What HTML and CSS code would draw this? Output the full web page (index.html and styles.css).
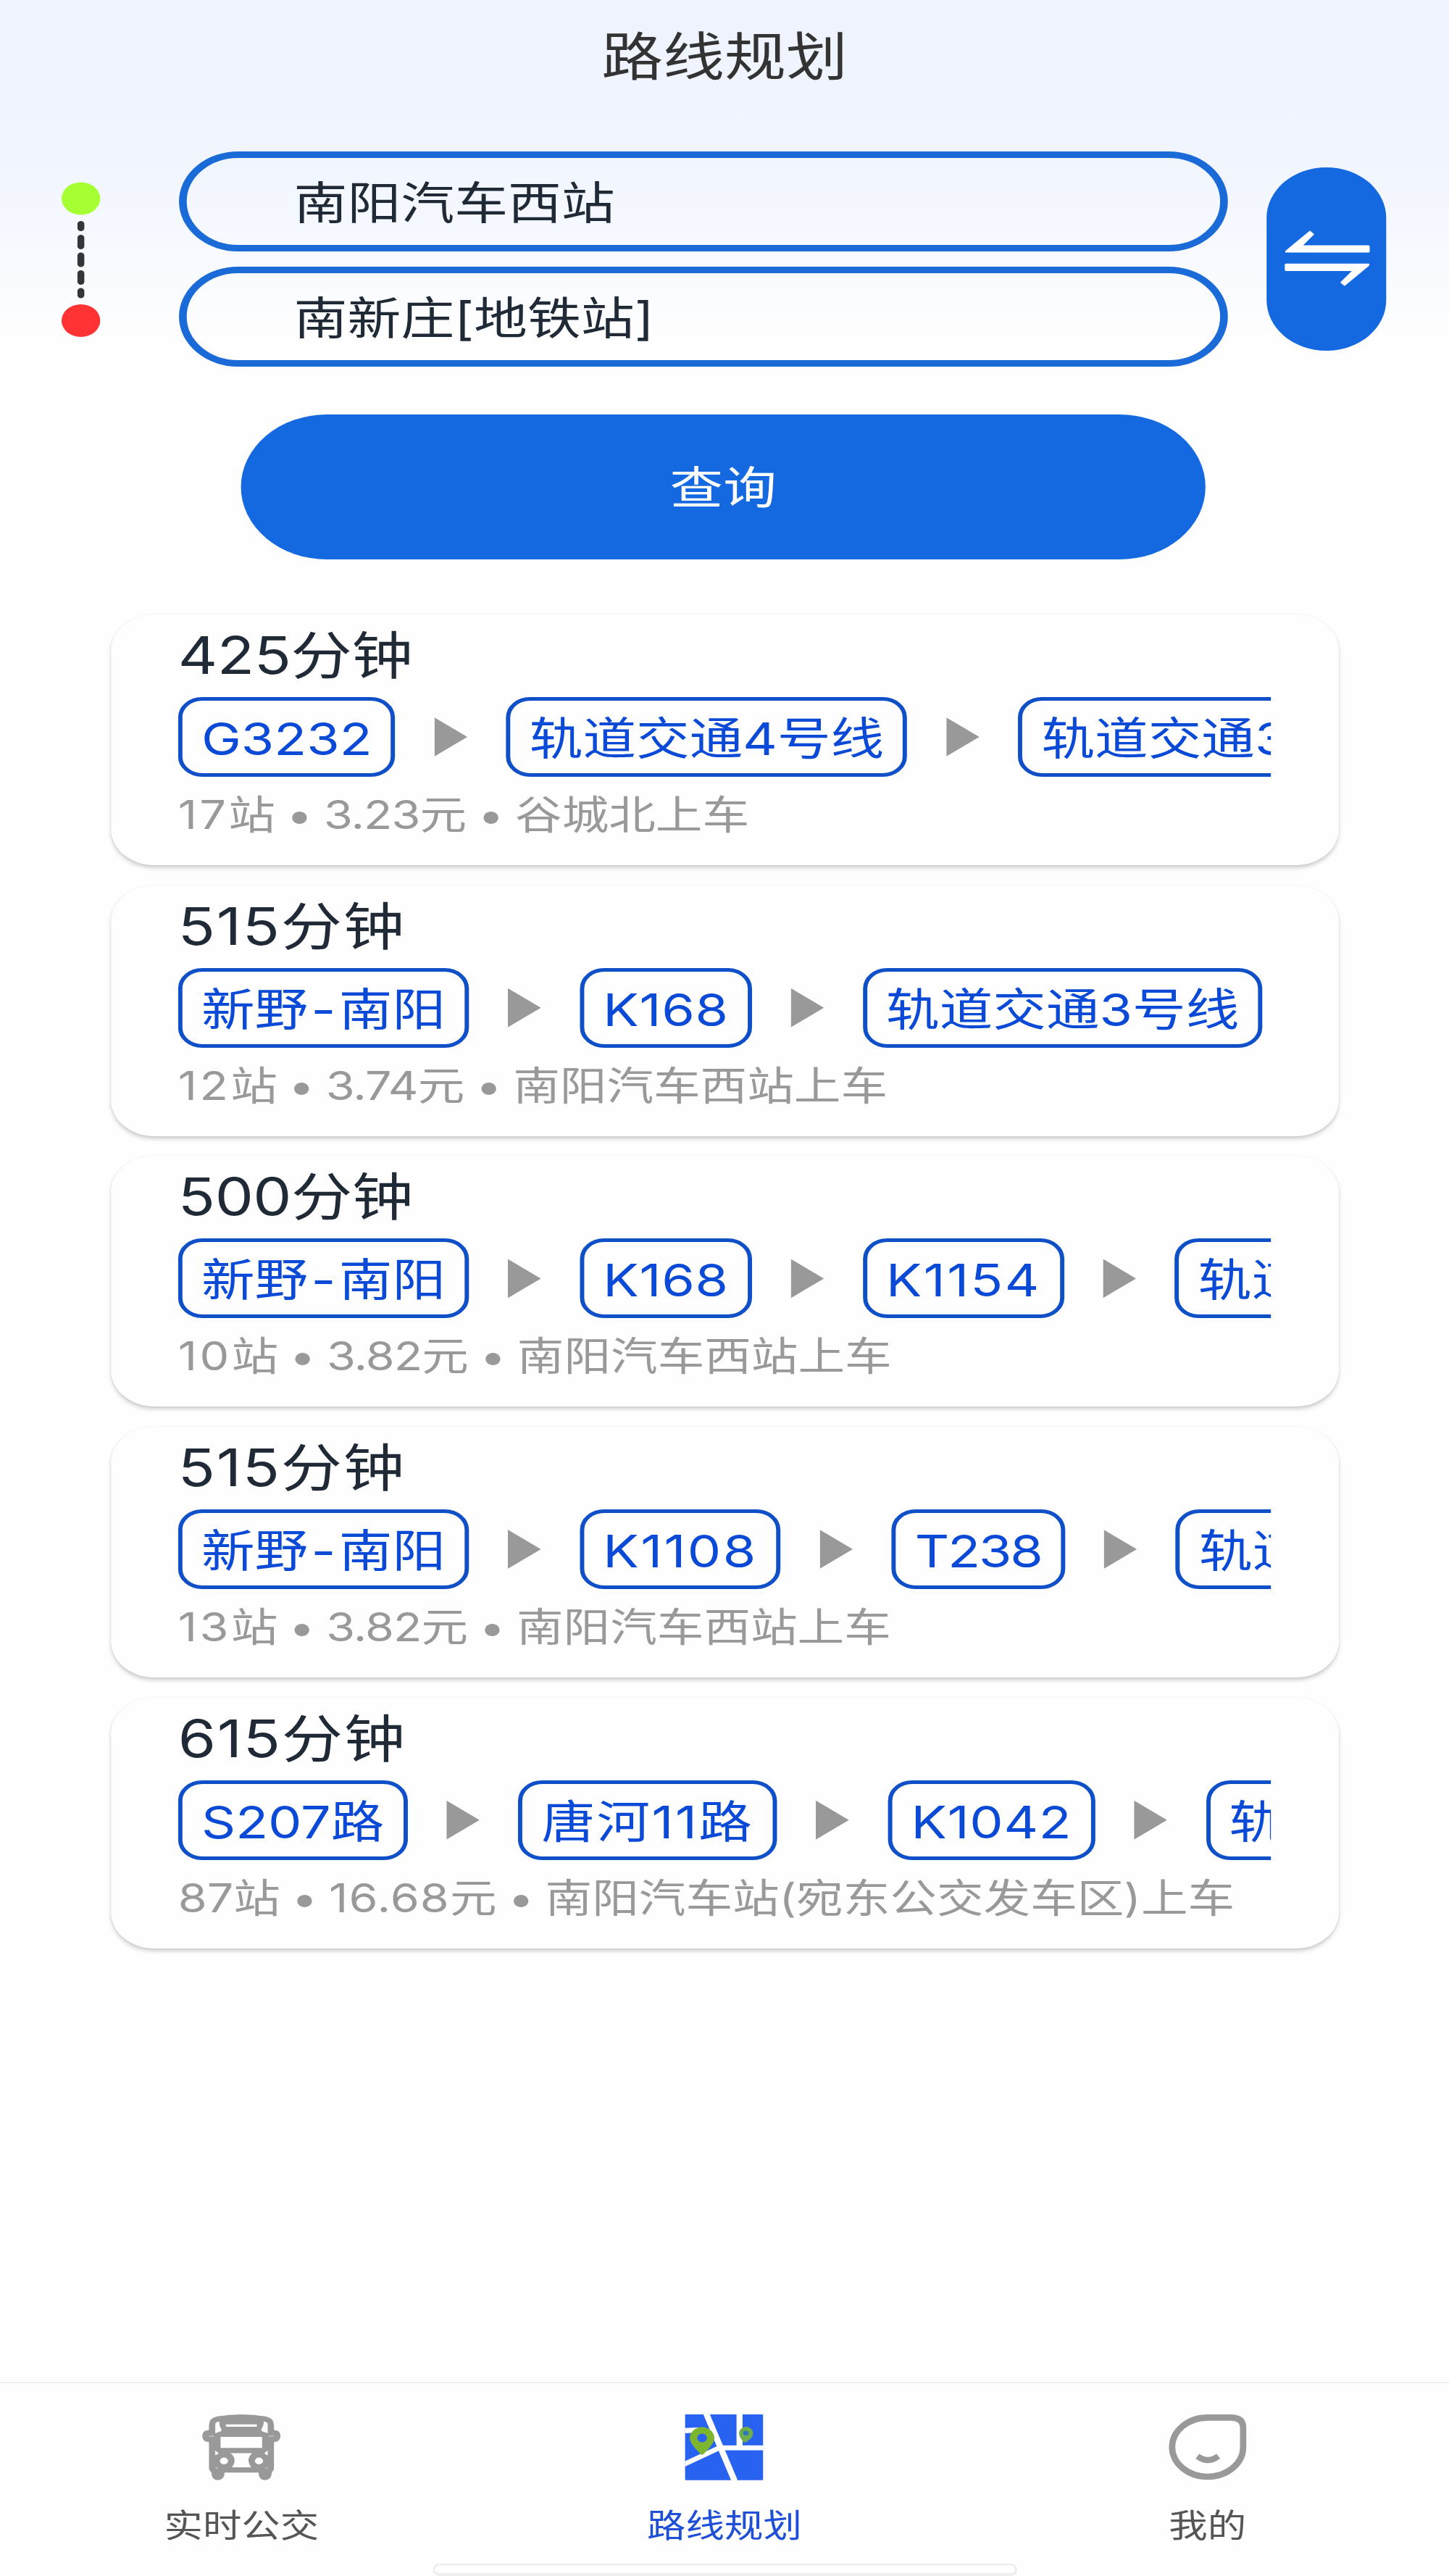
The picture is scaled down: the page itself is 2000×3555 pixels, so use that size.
FILE: index.html
```
<!DOCTYPE html>
<html lang="zh-CN">
<head>
    <meta charset="UTF-8">
    <title>路线规划</title>
    <link rel="stylesheet" href="styles.css">
</head>
<body>
    <div class="screen">
        <header class="header">
            <h1>路线规划</h1>
        </header>

        <section class="search">
            <svg class="endpoints" viewBox="0 0 46 214">
                <circle cx="23" cy="23" r="22.5" fill="#a6ff33"/>
                <path d="M23 58v6M23 77v12M23 101.5v12M23 126v12M23 150.5v6" stroke="#333639" stroke-width="8" stroke-linecap="round"/>
                <circle cx="23" cy="191.5" r="22.5" fill="#ff3333"/>
            </svg>
            <div class="fields">
                <div class="field">南阳汽车西站</div>
                <div class="field">南新庄[地铁站]</div>
            </div>
            <button class="swap">
                <svg viewBox="0 0 354 240" preserveAspectRatio="none">
                    <path d="M4 88 105 4 123 19 77 65H348Q354 65 354 71V90Q354 96 348 96H6Q-1 96 4 88Z"/>
                    <path d="M350 152 249 236 231 221 279 173H6Q0 173 0 167V148Q0 142 6 142H348Q357 142 350 152Z"/>
                </svg>
            </button>
        </section>

        <button class="query">查询</button>

        <main class="routes">
            <article class="card">
                <h2>425分钟</h2>
                <div class="lines">
                    <span class="chip">G3232</span><i class="arrow"></i>
                    <span class="chip">轨道交通4号线</span><i class="arrow"></i>
                    <span class="chip">轨道交通3号线</span>
                </div>
                <p><span class="stops">17</span>站 • <span class="price">3.23</span>元 • 谷城北上车</p>
            </article>
            <article class="card">
                <h2 class="wide">515分钟</h2>
                <div class="lines">
                    <span class="chip">新野<span class="dash">-</span>南阳</span><i class="arrow"></i>
                    <span class="chip loose">K168</span><i class="arrow"></i>
                    <span class="chip">轨道交通3号线</span>
                </div>
                <p><span class="stops">12</span>站 • <span class="price">3.74</span>元 • 南阳汽车西站上车</p>
            </article>
            <article class="card">
                <h2>500分钟</h2>
                <div class="lines">
                    <span class="chip">新野<span class="dash">-</span>南阳</span><i class="arrow"></i>
                    <span class="chip loose">K168</span><i class="arrow"></i>
                    <span class="chip wide">K1154</span><i class="arrow"></i>
                    <span class="chip">轨道交通3号线</span>
                </div>
                <p><span class="stops">10</span>站 • <span class="price">3.82</span>元 • 南阳汽车西站上车</p>
            </article>
            <article class="card">
                <h2 class="wide">515分钟</h2>
                <div class="lines">
                    <span class="chip">新野<span class="dash">-</span>南阳</span><i class="arrow"></i>
                    <span class="chip wide">K1108</span><i class="arrow"></i>
                    <span class="chip tight">T238</span><i class="arrow"></i>
                    <span class="chip">轨道交通3号线</span>
                </div>
                <p><span class="stops">13</span>站 • <span class="price">3.82</span>元 • 南阳汽车西站上车</p>
            </article>
            <article class="card">
                <h2 class="wide">615分钟</h2>
                <div class="lines">
                    <span class="chip">S207路</span><i class="arrow"></i>
                    <span class="chip wide">唐河11路</span><i class="arrow"></i>
                    <span class="chip loose">K1042</span><i class="arrow"></i>
                    <span class="chip">轨道交通3号线</span>
                </div>
                <p>87站 • <span class="wide">16.68</span>元 • 南阳汽车站(宛东公交发车区)上车</p>
            </article>
        </main>

        <nav class="tabbar">
            <a class="tab">
                <svg viewBox="0 0 324 272" preserveAspectRatio="none">
                    <path fill="#999" fill-rule="evenodd" d="M28 64V44Q28 15 62 8Q162 -8 262 8Q297 15 297 44V64Q324 66 324 88Q324 112 297 114V222Q297 232 288 240Q286 271 259 271Q234 271 233 240H93Q91 271 64 271Q39 271 38 240Q28 232 28 222V114Q0 112 0 88Q0 66 28 64ZM54 42V78L76 70Q84 65 76 55Q70 42 71 29Q54 30 54 42ZM254 29Q256 42 248 55Q241 65 249 70L271 78V42Q271 30 254 29ZM98 41V51H226V41ZM76 93V138H248V93ZM54 149V169Q66 165 68 160ZM271 149V169Q259 165 257 160ZM90 178A17 14 0 1 0 90 206A17 14 0 1 0 90 178ZM235 178A17 14 0 1 0 235 206A17 14 0 1 0 235 178ZM117 160Q148 185 123 218H203Q178 185 207 160Z"/>
                    <path d="M28 90H48M276 90H296M54 219 64 222M271 219 261 222" stroke="#ccc" stroke-width="4"/>
                </svg>
                <span>实时公交</span>
            </a>
            <a class="tab active">
                <svg viewBox="0 0 324 272" preserveAspectRatio="none">
                    <rect width="324" height="271" rx="4" fill="#2862f0"/>
                    <g stroke="#fff" fill="none">
                        <path d="M88 -4 206 275" stroke-width="25"/>
                        <path d="M226 -4V136" stroke-width="25"/>
                        <path d="M-4 206 142 138H328" stroke-width="20"/>
                        <path d="M-4 67 60 64" stroke-width="21"/>
                    </g>
                    <path fill="#7db52f" d="M71 167Q66 167 59 158Q20 118 20 98A51 46 0 0 1 122 98Q122 118 83 158Q76 167 71 167Z"/>
                    <ellipse cx="71" cy="97" rx="20" ry="18" fill="#2862f0"/>
                    <path fill="#6fae4b" d="M253 115H243L230 97Q224 88 224 78A29 27 0 0 1 282 78Q282 89 273 99Z"/>
                    <ellipse cx="252" cy="77" rx="12" ry="10" fill="#2f78b8"/>
                </svg>
                <span>路线规划</span>
            </a>
            <a class="tab">
                <svg viewBox="0 0 324 272" preserveAspectRatio="none">
                    <path d="M162 13H262Q309 15 309 54V136A147 122 0 1 1 162 13Z" fill="none" stroke="#999" stroke-width="26"/>
                    <path d="M120 172Q164 205 206 172" fill="none" stroke="#999" stroke-width="25"/>
                </svg>
                <span>我的</span>
            </a>
            <div class="home-indicator"></div>
        </nav>
    </div>
</body>
</html>
```
FILE: styles.css
```
* {
    box-sizing: border-box;
}

body {
    margin: 0;
    background: #fefefe;
    font-family: Inter, "Noto Sans CJK SC", sans-serif;
    font-feature-settings: "calt" 0;
}

/* the phone screen is drawn a little wider than its own pixels */
.screen {
    width: 1684px;
    height: 3555px;
    display: flex;
    flex-direction: column;
    transform: scaleX(1.18765);
    transform-origin: 0 0;
    background: linear-gradient(#eef3fe 0, #f1f5fe 220px, #f8faff 360px, #fefefe 470px);
}

h1, h2, p {
    margin: 0;
    font-weight: 400;
}

button {
    border: none;
    padding: 0;
    font-family: inherit;
    color: #fff;
    background: #1569e0;
}

.header {
    height: 209px;
    text-align: center;
}

h1 {
    font-size: 71.5px;
    line-height: 157px;
    color: #333;
}

.search {
    display: flex;
    align-items: center;
    height: 297px;
    padding: 0 73px 0 71px;
}

.endpoints {
    width: 46px;
    height: 214px;
    margin-right: 90.5px;
}

.fields {
    width: 1219px;
    display: flex;
    flex-direction: column;
    gap: 21px;
}

.field {
    height: 138px;
    border: 9px solid #1a6ad8;
    border-radius: 69px;
    padding-left: 125px;
    font-size: 62.2px;
    line-height: 126px;
    color: #1f2a36;
}

.swap {
    width: 139px;
    height: 253px;
    border-radius: 70px;
    margin-left: 45.5px;
    display: flex;
    align-items: center;
    justify-content: center;
}

.swap svg {
    width: 99px;
    height: 79px;
    margin: 0 0 2px 2px;
    fill: #fff;
}

.query {
    width: 1121px;
    height: 200px;
    margin: 66px 0 76px 280px;
    border-radius: 100px;
    font-size: 62px;
    line-height: 204px;
}

.routes {
    flex: 1;
    display: flex;
    flex-direction: column;
    gap: 27.7px;
    padding: 0 128.5px;
}

.card {
    height: 346px;
    padding: 7px 78.5px 0;
    border-radius: 50px;
    background: #fefefe;
    box-shadow: 0 4px 6px -1px rgba(0, 0, 0, 0.22), 0 0 3px rgba(0, 0, 0, 0.05);
}

h2 {
    font-size: 71px;
    line-height: 98px;
    letter-spacing: -0.4px;
    color: #1f2a36;
}

h2.wide {
    letter-spacing: 1.4px;
}

.lines {
    display: flex;
    align-items: center;
    gap: 45.2px;
    height: 110px;
    margin-top: 9px;
    overflow: hidden;
}

.chip {
    flex: none;
    height: 110px;
    padding: 0 22px;
    border: 5px solid #0f50c8;
    border-radius: 28px;
    font-size: 62px;
    line-height: 106px;
    white-space: nowrap;
    color: #0a4ad6;
}

.chip.loose {
    letter-spacing: 0.6px;
}

.chip.wide {
    letter-spacing: 2px;
}

.chip.tight {
    letter-spacing: -1.8px;
}

.dash {
    padding: 0 3.7px;
}

.arrow {
    flex: none;
    width: 38.5px;
    height: 54px;
    background: #999;
    clip-path: polygon(0 0, 100% 50%, 0 100%);
}

p {
    font-size: 54.4px;
    line-height: 104px;
    word-spacing: -2.4px;
    white-space: nowrap;
    color: #999;
}

.stops {
    letter-spacing: 2.8px;
}

.price {
    letter-spacing: -0.8px;
}

p .wide {
    letter-spacing: 1px;
}

.tabbar {
    display: flex;
    height: 268px;
    border-top: 2px solid #f0f0f0;
    position: relative;
}

.tab {
    flex: 1;
    display: flex;
    flex-direction: column;
    align-items: center;
    padding-top: 43px;
    color: #555;
}

.tab svg {
    width: 91px;
    height: 91px;
}

.tab span {
    font-size: 45px;
    line-height: 60px;
    margin-top: 33px;
}

.tab.active {
    color: #1f4fd6;
}

.home-indicator {
    position: absolute;
    left: 503px;
    bottom: 0;
    width: 679px;
    height: 17px;
    border: 2px solid #ebe9ea;
    border-bottom: 4px solid #eee;
    border-radius: 9px;
    background: #fff;
}
```
